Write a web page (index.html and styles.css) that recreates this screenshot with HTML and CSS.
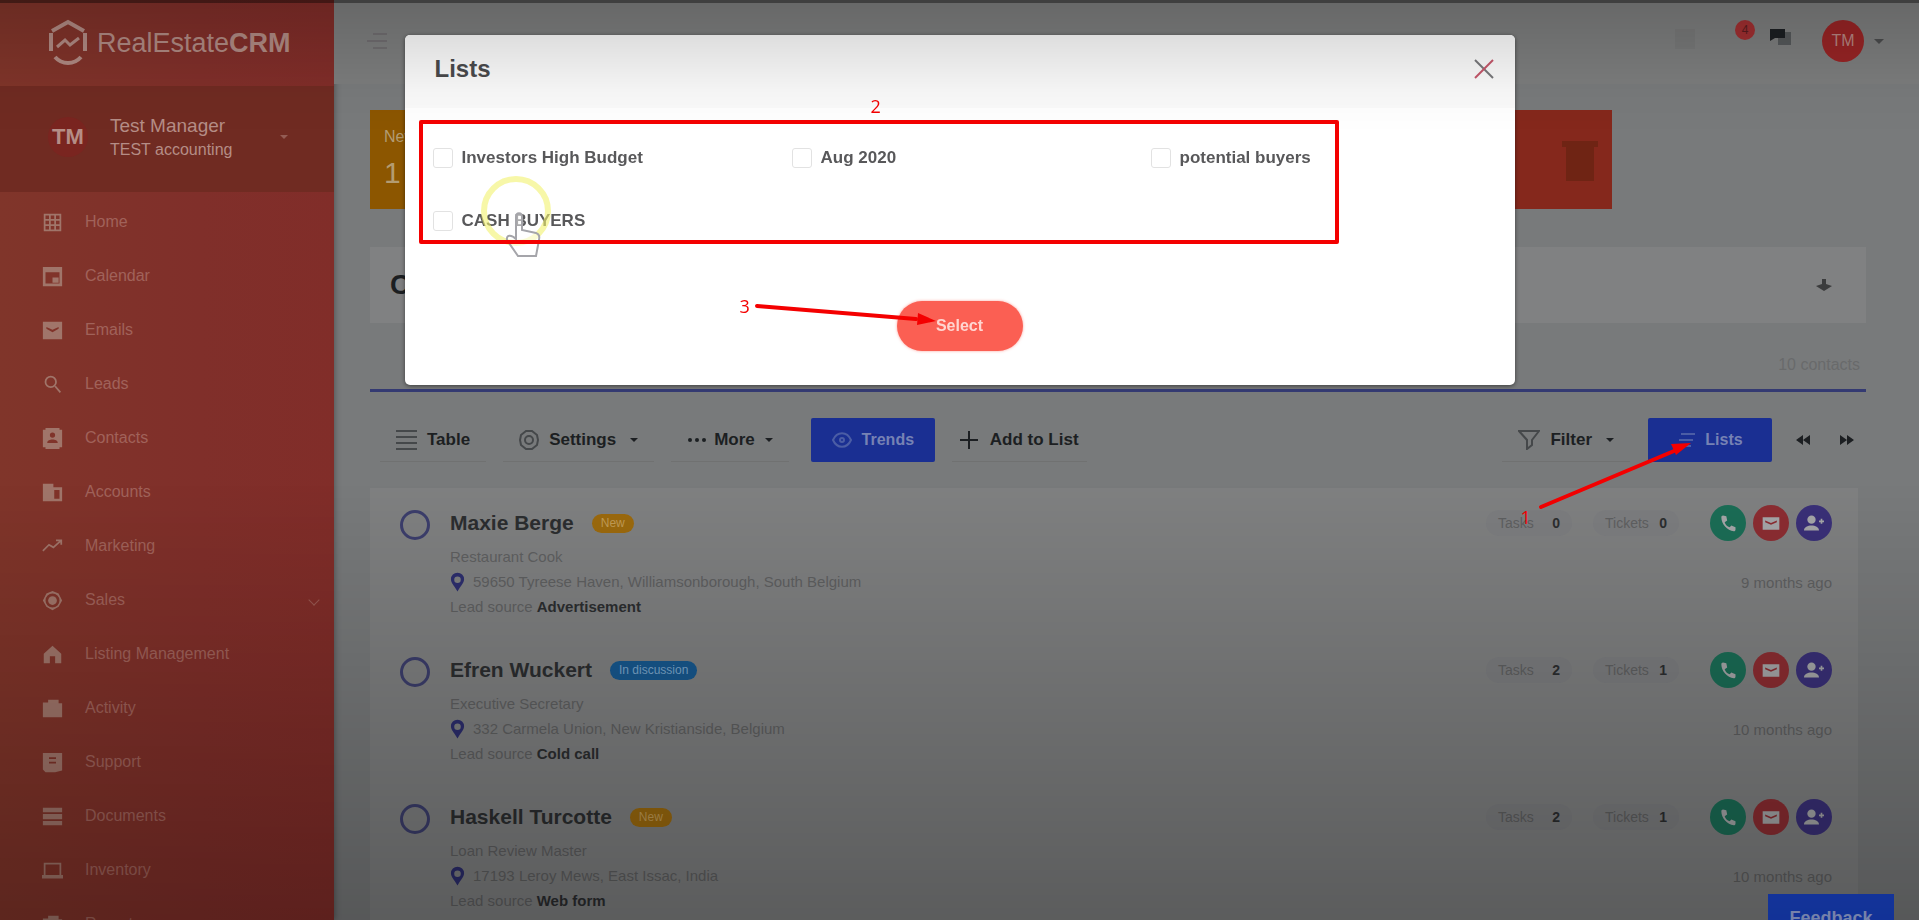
FILE: index.html
```html
<!DOCTYPE html>
<html lang="en">
    <head>
        <meta charset="utf-8">
        <title>RealEstateCRM - Contacts</title>
        <link rel="stylesheet" href="styles.css">
    </head>
    <body>
        <!-- shared icons -->
        <svg class="sprite" width="0" height="0">
            <symbol id="phone" viewBox="0 0 24 24"><path d="M6 3l4 1 1 5-3 2c1 3 3 5 6 6l2-2 5 2v3c0 1-1 2-2 2C11 21 4 13 4 5c0-1 1-2 2-2z"/></symbol>
            <symbol id="mail" viewBox="0 0 24 24"><path fill-rule="evenodd" d="M2 5h20v15H2zm3 4v2l7 3 7-3V9l-7 3z"/></symbol>
            <symbol id="user-add" viewBox="0 0 24 24"><circle cx="9" cy="8" r="5"/><path d="M0 21c0-8 18-8 18 0zM18 9h2V7h2v2h2v2h-2v2h-2v-2h-2z"/></symbol>
            <symbol id="pin" viewBox="0 0 16 20"><path fill-rule="evenodd" d="M8 0a7 7 0 0 1 7 7c0 4-3 6-7 13C4 13 1 11 1 7a7 7 0 0 1 7-7zm0 4a3 3 0 1 0 0 7 3 3 0 0 0 0-7z"/></symbol>
        </svg>

        <div class="app">
            <aside class="sidebar">
                <a class="brand" href="#">
                    <svg width="42" height="48" viewBox="0 0 42 48" fill="none" stroke="currentColor">
                        <path stroke-width="4" d="M4 14v18M38 14v18M5 12L21 3l16 9M8 38c7 8 19 8 26 0"/>
                        <path stroke-width="3" d="M10 28l8-7 5 5 9-7"/>
                    </svg>
                    <span>RealEstate<b>CRM</b></span>
                </a>
                <div class="profile">
                    <span class="profile-avatar">TM</span>
                    <div class="profile-info">
                        <strong>Test Manager</strong>
                        <span>TEST accounting</span>
                    </div>
                    <i class="caret"></i>
                </div>
                <nav class="menu">
                    <a href="#"><svg viewBox="0 0 24 24"><path fill-rule="evenodd" d="M2 2h20v20H2zm2 2v4h4V4zm6 0v4h4V4zm6 0v4h4V4zM4 10v4h4v-4zm6 0v4h4v-4zm6 0v4h4v-4zM4 16v4h4v-4zm6 0v4h4v-4zm6 0v4h4v-4z"/></svg>Home</a>
                    <a href="#"><svg viewBox="0 0 24 24"><path fill-rule="evenodd" d="M1 1h22v22H1zm3 6v13h16V7zm8 6h7v6h-7z"/></svg>Calendar</a>
                    <a href="#"><svg viewBox="0 0 24 24"><path fill-rule="evenodd" d="M1 2h22v20H1zm4 6v2l7 4 7-4V8l-7 3z"/></svg>Emails</a>
                    <a href="#"><svg viewBox="0 0 24 24" fill="none" stroke="currentColor" stroke-width="2"><circle cx="10" cy="9" r="6"/><path d="M15 14l6 7"/></svg>Leads</a>
                    <a href="#"><svg viewBox="0 0 24 24"><path fill-rule="evenodd" d="M4 0h16v2h3v20h-3v2H4v-2H1V2h3zm8 5a3 3 0 1 0 0 6 3 3 0 0 0 0-6zm-6 12h12c0-5-12-5-12 0z"/></svg>Contacts</a>
                    <a href="#"><svg viewBox="0 0 24 24"><path fill-rule="evenodd" d="M1 2h12v4h10v16H1zm13 7v10h6V9z"/></svg>Accounts</a>
                    <a href="#"><svg viewBox="0 0 24 24" fill="none" stroke="currentColor" stroke-width="2"><path d="M1 17l7-7 5 3 9-8M16 5h6v5"/></svg>Marketing</a>
                    <a href="#"><svg viewBox="0 0 24 24"><path fill-rule="evenodd" d="M12 1l7 3 4 8-4 7-7 4-7-4-4-7 4-8zm0 3a8 8 0 1 0 0 16 8 8 0 0 0 0-16z"/><circle cx="12" cy="12" r="5"/></svg>Sales<span class="chevron"></span></a>
                    <a href="#"><svg viewBox="0 0 24 24"><path d="M12 2l10 9v11h-7v-8H9v8H2V11z"/></svg>Listing Management</a>
                    <a href="#"><svg viewBox="0 0 24 24"><path d="M1 5h6V2h12v4h4v16H1z"/></svg>Activity</a>
                    <a href="#"><svg viewBox="0 0 24 24"><path fill-rule="evenodd" d="M1 1h22v20l-8 2H4l-3-3zm7 5v2h8V6zm0 5v2h8v-2z"/></svg>Support</a>
                    <a href="#"><svg viewBox="0 0 24 24"><path d="M1 2h22v5H1zm0 7h22v6H1zm0 8h22v5H1z"/></svg>Documents</a>
                    <a href="#"><svg viewBox="0 0 24 24"><path fill-rule="evenodd" d="M2 3h20v14h2v4H0v-4h2zm2 2v12h16V5z"/></svg>Inventory</a>
                    <a href="#"><svg viewBox="0 0 24 24"><path d="M1 5h6V2h12v4h4v16H1z"/></svg>Reports</a>
                </nav>
            </aside>

            <div class="main">
                <header class="topbar">
                    <button class="icon-btn hamburger" aria-label="Toggle menu"><svg width="24" height="18" viewBox="0 0 24 18" fill="none" stroke="currentColor" stroke-width="2"><path d="M6 2h14M0 9h20M6 16h14"/></svg></button>
                    <div class="topbar-tools">
                        <button class="icon-btn tool faint" aria-label="Search"><svg width="20" height="20" viewBox="0 0 20 20"><path d="M0 0h20v20H0z"/></svg></button>
                        <button class="icon-btn tool" aria-label="Notifications"><span class="count">4</span></button>
                        <button class="icon-btn tool" aria-label="Messages"><svg width="22" height="18" viewBox="0 0 22 18"><path fill="#55585a" d="M8 5h13v13H8z"/><path d="M0 2h15v9H5l-5 3z"/></svg></button>
                        <button class="icon-btn user-btn" aria-label="Account"><span class="avatar">TM</span><i class="caret"></i></button>
                    </div>
                </header>

                <div class="content">
                    <div class="stats">
                        <div class="stat orange"><span>New</span><b>1</b></div>
                        <div class="stat blue"></div>
                        <div class="stat green"></div>
                        <div class="stat red">
                            <svg width="36" height="42" viewBox="0 0 36 42"><path d="M0 2h36v6H0zM4 8h28v34H4z"/></svg>
                        </div>
                    </div>

                    <section class="panel">
                        <h2>Contacts</h2>
                        <svg width="16" height="12" viewBox="0 0 16 12"><path d="M0 5l8-5 8 5-6 2v5H6V7z"/></svg>
                    </section>

                    <p class="total">10 contacts</p>

                    <div class="toolbar">
                        <button class="tb-btn"><svg width="21" height="21" viewBox="0 0 21 21" fill="none" stroke="currentColor" stroke-width="2"><path d="M0 2h21M0 8h21M0 14h21M0 20h21"/></svg>Table</button>
                        <button class="tb-btn"><svg width="20" height="20" viewBox="0 0 20 20" fill="none" stroke="currentColor" stroke-width="2"><path d="M7 1h6l5 4 1 5-1 5-5 4H7l-5-4-1-5 1-5z"/><circle cx="10" cy="10" r="4"/></svg>Settings<i class="caret"></i></button>
                        <button class="tb-btn more"><svg width="21" height="6" viewBox="0 0 21 6"><circle cx="3" cy="3" r="2"/><circle cx="10" cy="3" r="2"/><circle cx="17" cy="3" r="2"/></svg>More<i class="caret"></i></button>
                        <button class="tb-btn primary"><svg width="20" height="16" viewBox="0 0 20 16" fill="none" stroke="currentColor" stroke-width="2"><path d="M1 8c4-9 14-9 18 0-4 9-14 9-18 0z"/><circle cx="10" cy="8" r="2"/></svg>Trends</button>
                        <button class="tb-btn add"><svg width="18" height="18" viewBox="0 0 18 18" fill="none" stroke="currentColor" stroke-width="2"><path d="M9 0v18M0 9h18"/></svg>Add to List</button>
                        <div class="toolbar-right">
                            <button class="tb-btn"><svg width="22" height="20" viewBox="0 0 22 20" fill="none" stroke="currentColor" stroke-width="2"><path d="M1 1h20l-7 9v5l-5 4v-9z"/></svg>Filter<i class="caret"></i></button>
                            <button class="tb-btn primary">
                                <svg width="18" height="16" viewBox="0 0 18 16" fill="none" stroke="currentColor" stroke-width="2"><path d="M4 2h14M2 8h14M0 14h14"/></svg>Lists
                            </button>
                            <button class="icon-btn pager" aria-label="Previous"><svg width="14" height="10" viewBox="0 0 14 10"><path d="M7 0v10L0 5zM14 0v10L7 5z"/></svg></button>
                            <button class="icon-btn pager" aria-label="Next"><svg width="14" height="10" viewBox="0 0 14 10"><path d="M0 0v10l7-5zM7 0v10l7-5z"/></svg></button>
                            <!-- step 1 -->
                            <div class="step step-one">
                                <svg width="160" height="80" viewBox="0 0 160 80"><path class="line" d="M7 72L140 16"/><path class="head" d="M157 8l-15 12-5-11z"/></svg>
                                <span>1</span>
                            </div>
                        </div>
                    </div>

                    <div class="records">
                        <article class="record">
                            <input type="checkbox" aria-label="Maxie Berge">
                            <div class="record-body">
                                <h3>Maxie Berge <span class="badge new">New</span></h3>
                                <p>Restaurant Cook</p>
                                <p class="address"><svg><use href="#pin"/></svg>59650 Tyreese Haven, Williamsonborough, South Belgium</p>
                                <p>Lead source <b>Advertisement</b></p>
                            </div>
                            <div class="record-side">
                                <div class="record-actions">
                                    <span class="pill">Tasks <b>0</b></span>
                                    <span class="pill">Tickets <b>0</b></span>
                                    <button class="round green" aria-label="Call"><svg><use href="#phone"/></svg></button>
                                    <button class="round red" aria-label="Email"><svg><use href="#mail"/></svg></button>
                                    <button class="round violet" aria-label="Assign"><svg><use href="#user-add"/></svg></button>
                                </div>
                                <time>9 months ago</time>
                            </div>
                        </article>
                        <article class="record">
                            <input type="checkbox" aria-label="Efren Wuckert">
                            <div class="record-body">
                                <h3>Efren Wuckert <span class="badge info">In discussion</span></h3>
                                <p>Executive Secretary</p>
                                <p class="address"><svg><use href="#pin"/></svg>332 Carmela Union, New Kristianside, Belgium</p>
                                <p>Lead source <b>Cold call</b></p>
                            </div>
                            <div class="record-side">
                                <div class="record-actions">
                                    <span class="pill">Tasks <b>2</b></span>
                                    <span class="pill">Tickets <b>1</b></span>
                                    <button class="round green" aria-label="Call"><svg><use href="#phone"/></svg></button>
                                    <button class="round red" aria-label="Email"><svg><use href="#mail"/></svg></button>
                                    <button class="round violet" aria-label="Assign"><svg><use href="#user-add"/></svg></button>
                                </div>
                                <time>10 months ago</time>
                            </div>
                        </article>
                        <article class="record">
                            <input type="checkbox" aria-label="Haskell Turcotte">
                            <div class="record-body">
                                <h3>Haskell Turcotte <span class="badge new">New</span></h3>
                                <p>Loan Review Master</p>
                                <p class="address"><svg><use href="#pin"/></svg>17193 Leroy Mews, East Issac, India</p>
                                <p>Lead source <b>Web form</b></p>
                            </div>
                            <div class="record-side">
                                <div class="record-actions">
                                    <span class="pill">Tasks <b>2</b></span>
                                    <span class="pill">Tickets <b>1</b></span>
                                    <button class="round green" aria-label="Call"><svg><use href="#phone"/></svg></button>
                                    <button class="round red" aria-label="Email"><svg><use href="#mail"/></svg></button>
                                    <button class="round violet" aria-label="Assign"><svg><use href="#user-add"/></svg></button>
                                </div>
                                <time>10 months ago</time>
                            </div>
                        </article>
                    </div>
                </div>
            </div>
        </div>

        <button class="feedback">Feedback</button>

        <div class="modal" role="dialog" aria-labelledby="modal-title">
            <div class="modal-header">
                <h1 id="modal-title">Lists</h1>
                <button class="icon-btn" aria-label="Close"><svg width="22" height="22" viewBox="0 0 22 22" fill="none" stroke="currentColor" stroke-width="2"><path stroke="#77777a" d="M2 2l18 18"/><path stroke="#c4566a" d="M20 2L2 20"/></svg></button>
            </div>
            <div class="modal-body">
                <div class="options">
                    <label><input type="checkbox">Investors High Budget</label>
                    <label><input type="checkbox">Aug 2020</label>
                    <label><input type="checkbox">potential buyers</label>
                    <label><input type="checkbox">CASH BUYERS</label>
                </div>
                <button class="select-btn">Select</button>
            </div>
            <!-- pointer -->
            <div class="pointer">
                <svg width="76" height="90" viewBox="0 0 76 90" fill="none">
                    <circle cx="36" cy="36" r="32" stroke="#f1f26e" stroke-width="6" stroke-opacity=".6"/>
                    <path fill="#fff" fill-opacity=".5" stroke="#a5a5aa" stroke-width="2" d="M36 62V42c0-5 6-5 6 0v13l14 3c3 1 4 3 3 7l-3 16H38L27 65c-1-5 4-6 9-1z"/>
                </svg>
            </div>
            <!-- steps 2 and 3 -->
            <div class="step step-two"><span>2</span></div>
            <div class="step step-three">
                <span>3</span>
                <svg width="190" height="30" viewBox="0 0 190 30"><path class="line" d="M7 6L166 19"/><path class="head" d="M186 21l-19 4 1-12z"/></svg>
            </div>
        </div>

        <div class="shade"></div>
    </body>
</html>
```
FILE: styles.css
```css
* {
    box-sizing: border-box;
}

body {
    margin: 0;
    background: #787a7b;
    color: #1c1f22;
    font-family: "Liberation Sans", Arial, sans-serif;
    font-size: 16px;
    overflow: hidden;
}

h1, h2, h3, p {
    margin: 0;
}

button {
    font-family: inherit;
    border: 0;
    background: none;
    padding: 0;
    color: inherit;
}

a {
    color: inherit;
    text-decoration: none;
}

svg {
    fill: currentColor;
    flex-shrink: 0;
}

svg[fill="none"] {
    fill: none;
}

.sprite {
    position: absolute;
}

.app {
    display: flex;
    height: 100vh;
    overflow: hidden;
}

.caret {
    border: 5px solid transparent;
    border-top-color: currentColor;
    border-bottom: 0;
}

.icon-btn {
    display: flex;
    align-items: center;
    justify-content: center;
}

/* sidebar */
.sidebar {
    width: 334px;
    flex-shrink: 0;
    background: linear-gradient(90deg, #80352a, #802f2a 60%, #812d29);
    box-shadow: 1px 0 6px rgba(0, 0, 0, .3);
    color: #b08078;
}

.brand {
    display: flex;
    align-items: center;
    gap: 8px;
    height: 86px;
    padding-left: 47px;
    font-size: 27px;
    color: #b08a83;
}

.profile {
    display: flex;
    align-items: center;
    height: 106px;
    padding: 0 0 4px 48px;
    background: #702b22;
    color: #b58d86;
}

.profile-avatar {
    width: 40px;
    height: 40px;
    margin-right: 22px;
    border-radius: 50%;
    background: #7a2520;
    font-size: 22px;
    font-weight: bold;
    line-height: 40px;
    text-align: center;
}

.profile-info {
    display: flex;
    flex-direction: column;
    gap: 4px;
    width: 170px;
    font-size: 16px;
}

.profile-info strong {
    font-size: 19px;
    font-weight: normal;
}

.profile .caret {
    border-width: 4px;
    border-bottom: 0;
    opacity: .5;
}

.menu {
    padding-top: 3px;
}

.menu a {
    display: flex;
    align-items: center;
    gap: 22px;
    height: 54px;
    padding: 0 16px 0 42px;
    color: #a0625a;
}

.menu svg {
    width: 21px;
    height: 21px;
    color: #a0756a;
}

.chevron {
    width: 8px;
    height: 8px;
    margin-left: auto;
    border: solid #9a5a52;
    border-width: 0 1px 1px 0;
    transform: rotate(45deg);
}

/* top bar */
.main {
    flex: 1;
    min-width: 0;
}

.topbar {
    display: flex;
    align-items: center;
    justify-content: space-between;
    height: 84px;
    padding: 0 35px 2px 33px;
    background: #7c7d7d;
}

.hamburger {
    color: #706d70;
}

.topbar-tools {
    display: flex;
    align-items: center;
}

.tool {
    width: 36px;
    height: 36px;
}

.tool.faint {
    margin-right: 24px;
    color: #777878;
}

.tool svg {
    margin-bottom: 10px;
}

.tool.faint svg {
    margin-bottom: 4px;
}

.count {
    width: 20px;
    height: 20px;
    margin-bottom: 22px;
    border-radius: 50%;
    background: #a02f31;
    color: #5b1c1e;
    font-size: 12px;
    line-height: 20px;
}

.user-btn {
    gap: 10px;
    margin-left: 23px;
    color: #4a4b4c;
}

.avatar {
    width: 42px;
    height: 42px;
    border-radius: 50%;
    background: #972425;
    color: #b58480;
    font-size: 16px;
    line-height: 42px;
}

/* content */
.content {
    padding: 26px 53px 0 36px;
}

.stats {
    display: grid;
    grid-template-columns: repeat(4, 1fr);
    gap: 24px;
    width: 83%;
    height: 99px;
    margin-bottom: 38px;
}

.stat {
    display: flex;
    flex-direction: column;
    gap: 10px;
    padding: 18px 14px;
    color: #b39c72;
}

.stat b {
    font-size: 30px;
    font-weight: normal;
}

.stat.orange {
    background: #8c5600;
}

.stat.blue {
    background: #1c4d78;
}

.stat.green {
    background: #22694f;
}

.stat.red {
    align-items: flex-end;
    justify-content: center;
    background: #85281c;
    color: #6f2414;
}

.panel {
    display: flex;
    align-items: center;
    justify-content: space-between;
    height: 76px;
    padding: 0 34px 0 20px;
    background: #808182;
}

.panel h2 {
    font-size: 28px;
}

.panel svg {
    color: #3b3c3d;
    transform: rotate(180deg);
}

.total {
    padding: 33px 6px 15px;
    border-bottom: 3px solid #343a72;
    font-size: 16px;
    line-height: 18px;
    text-align: right;
    color: #696a6b;
}

.toolbar {
    display: flex;
    align-items: center;
    gap: 17px;
    height: 96px;
    padding: 0 6px 0 10px;
}

.tb-btn {
    display: flex;
    align-items: center;
    justify-content: center;
    gap: 10px;
    height: 44px;
    padding: 0 16px;
    border-bottom: 1px solid #707171;
    font-size: 17px;
    font-weight: bold;
}

.tb-btn .caret {
    margin-left: 4px;
    border-width: 4px;
    border-bottom: 0;
}

.tb-btn svg {
    color: #45484a;
}

.tb-btn.more {
    gap: 6px;
    margin-right: 5px;
}

.tb-btn.more svg,
.tb-btn.add svg {
    color: inherit;
}

.tb-btn.add {
    gap: 12px;
    padding: 0 8px;
}

.tb-btn.primary {
    min-width: 124px;
    border: 0;
    border-radius: 2px;
    background: #1a2f92;
    font-size: 16px;
    color: #7682b4;
}

.tb-btn.primary svg {
    color: #4b5da5;
}

.toolbar-right {
    position: relative;
    display: flex;
    align-items: center;
    gap: 18px;
    margin-left: auto;
}

.pager {
    width: 26px;
    height: 44px;
}

/* records */
.records {
    margin-right: 8px;
    background: #7f8081;
}

.record {
    display: flex;
    align-items: flex-start;
    height: 147px;
    padding: 16px 26px 0 30px;
    color: #5f6061;
}

.record input {
    appearance: none;
    width: 30px;
    height: 30px;
    margin: 6px 20px 0 0;
    border: 3px solid #3c3e6c;
    border-radius: 50%;
}

.record-body {
    flex: 1;
    font-size: 15px;
}

.record h3 {
    display: flex;
    align-items: center;
    gap: 18px;
    height: 38px;
    margin-bottom: 2px;
    font-size: 21px;
    font-weight: bold;
    color: #2c2e30;
}

.record p {
    height: 25px;
    line-height: 25px;
}

.record p b {
    color: #2c2e30;
}

.badge {
    height: 19px;
    padding: 0 9px;
    border-radius: 10px;
    font-size: 12px;
    line-height: 19px;
    font-weight: normal;
}

.badge.new {
    background: #9c6a0e;
    color: #c29c55;
}

.badge.info {
    background: #17588f;
    color: #7ba6ca;
}

.address {
    display: flex;
    align-items: center;
    gap: 8px;
}

.address svg {
    width: 15px;
    height: 20px;
    color: #2d2e6e;
}

.record-side {
    display: flex;
    flex-direction: column;
    align-items: flex-end;
    gap: 32px;
}

.record-actions {
    display: flex;
    align-items: center;
    gap: 7px;
    height: 38px;
}

.pill {
    display: flex;
    justify-content: space-between;
    width: 86px;
    height: 26px;
    margin-right: 14px;
    padding: 0 12px;
    border-radius: 13px;
    background: rgba(90, 90, 120, .08);
    font-size: 14px;
    line-height: 26px;
}

.pill b {
    color: #2c2e30;
}

.pill + .round {
    margin-left: 10px;
}

.round {
    width: 36px;
    height: 36px;
    border-radius: 50%;
    color: #a5a6a8;
}

.round svg {
    display: block;
    width: 20px;
    height: 20px;
    margin: auto;
}

.round.green {
    background: #1b6d56;
}

.round.red {
    background: #8c2d32;
}

.round.violet {
    background: #3a3078;
}

.record time {
    font-size: 15px;
    line-height: 18px;
}

.feedback {
    position: fixed;
    right: 25px;
    bottom: -22px;
    width: 126px;
    height: 48px;
    background: #1a46d0;
    color: #a2b3ea;
    font-size: 18px;
    font-weight: bold;
}

/* modal */
.modal {
    position: fixed;
    top: 35px;
    left: 50%;
    width: 1110px;
    height: 350px;
    margin-left: -555px;
    border-radius: 5px;
    background: #fff;
    box-shadow: 0 1px 4px rgba(0, 0, 0, .5);
}

.modal-header {
    display: flex;
    align-items: center;
    justify-content: space-between;
    height: 73px;
    padding: 0 20px 6px 30px;
    border-radius: 5px 5px 0 0;
    background: #fafafa;
    color: #4a4a4c;
}

.modal-header h1 {
    font-size: 24px;
}

.modal-body {
    display: flex;
    flex-direction: column;
    align-items: center;
    padding-left: 28px;
}

.options {
    display: grid;
    grid-template-columns: repeat(3, 359px);
    align-self: flex-start;
    margin: 18px 0 49px;
}

.options label {
    display: flex;
    align-items: center;
    gap: 9px;
    height: 63px;
    font-size: 17px;
    font-weight: bold;
    color: #58585a;
}

.options input {
    appearance: none;
    width: 20px;
    height: 20px;
    margin: 0;
    border: 1px solid #e2e2e2;
    border-radius: 3px;
}

.select-btn {
    width: 126px;
    height: 50px;
    margin-right: 28px;
    border-radius: 25px;
    background: #fb5f53;
    box-shadow: 0 0 3px rgba(251, 95, 83, .6);
    color: #ffd5d0;
    font-size: 16px;
    font-weight: bold;
}

/* numbered steps drawn over the page */
.step {
    position: absolute;
    color: #f40000;
    font: 18px/20px "Open Sans", sans-serif;
    pointer-events: none;
}

.step svg {
    display: block;
}

.step .line {
    stroke: currentColor;
    stroke-width: 4;
    stroke-linecap: round;
}

.step-one {
    top: 17px;
    left: 32px;
}

.step-one span {
    display: block;
    margin: -8px 0 0 -14px;
}

.step-two {
    top: 85px;
    left: 14px;
    width: 920px;
    height: 124px;
    border: 4px solid;
    border-radius: 2px;
}

.step-two span {
    position: absolute;
    top: -28px;
    left: 448px;
}

.step-three {
    display: flex;
    top: 261px;
    left: 335px;
}

.step-three svg {
    margin-top: 4px;
}

.pointer {
    position: absolute;
    top: 140px;
    left: 75px;
    pointer-events: none;
}

.shade {
    position: fixed;
    inset: 0;
    border-top: 3px solid rgba(0, 0, 0, .3);
    background: linear-gradient(rgba(0, 0, 0, .16), rgba(0, 0, 0, .02) 90px, transparent 130px, transparent 480px, rgba(0, 0, 0, .28) 920px);
    pointer-events: none;
}
```
